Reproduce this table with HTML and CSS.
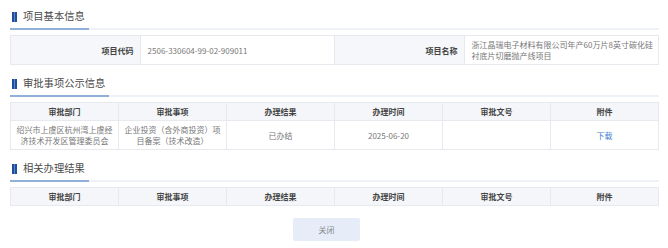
FILE: index.html
```
<!DOCTYPE html>
<html lang="zh-CN">
<head>
<meta charset="utf-8">
<link rel="stylesheet" href="styles.css">
</head>
<body>
<div class="page">
  <div class="sec-title first"><div class="sec-title-inner"><span class="bar"></span><span class="sec-text">项目基本信息</span></div></div>
  <table class="info">
    <colgroup><col class="c20"><col class="c30"><col class="c20"><col class="c30"></colgroup>
    <tr>
      <th>项目代码</th>
      <td>2506-330604-99-02-909011</td>
      <th>项目名称</th>
      <td>浙江晶瑞电子材料有限公司年产60万片8英寸碳化硅衬底片切磨抛产线项目</td>
    </tr>
  </table>

  <div class="sec-title"><div class="sec-title-inner"><span class="bar"></span><span class="sec-text">审批事项公示信息</span></div></div>
  <table class="grid">
    <tr class="head">
      <th>审批部门</th><th>审批事项</th><th>办理结果</th><th>办理时间</th><th>审批文号</th><th>附件</th>
    </tr>
    <tr class="row">
      <td>绍兴市上虞区杭州湾上虞经济技术开发区管理委员会</td>
      <td>企业投资（含外商投资）项目备案（技术改造）</td>
      <td>已办结</td>
      <td>2025-06-20</td>
      <td></td>
      <td><a class="link">下载</a></td>
    </tr>
  </table>

  <div class="sec-title"><div class="sec-title-inner"><span class="bar"></span><span class="sec-text">相关办理结果</span></div></div>
  <table class="grid">
    <tr class="head">
      <th>审批部门</th><th>审批事项</th><th>办理结果</th><th>办理时间</th><th>审批文号</th><th>附件</th>
    </tr>
  </table>

  <div class="actions"><button class="btn">关闭</button></div>
</div>
</body>
</html>
```

FILE: styles.css
```
html, body {
  margin: 0;
  padding: 0;
  background: #ffffff;
}
.page {
  padding: 5px 9px 0 10px;
  font-family: "Noto Sans CJK SC", "Noto Sans", sans-serif;
  color: #666;
}
.sec-title {
  display: flex;
  border-bottom: 2px solid #eef1f5;
  margin-top: 7px;
}
.sec-title.first {
  margin-top: 0;
}
.sec-title-inner {
  display: flex;
  align-items: center;
  height: 23px;
  padding: 0 4px 0 2px;
  border-bottom: 2px solid #8fb1d9;
  margin-bottom: -2px;
}
.bar {
  width: 5px;
  height: 10px;
  margin-right: 6px;
  background: linear-gradient(to right, #1d4f9e 0, #1d4f9e 2px, #5f86c4 2px, #5f86c4 3px, #1d4f9e 3px);
}
.sec-text {
  font-size: 10.3px;
  color: #4a4a4a;
  line-height: 1;
}
table {
  width: 100%;
  border-collapse: collapse;
  table-layout: fixed;
  margin-top: 5px;
  font-size: 8px;
}
.c20 { width: 20%; }
.c30 { width: 30%; }
.info th, .info td {
  border: 1px solid #e6e9ee;
  height: 28px;
  line-height: 11px;
}
.info th {
  background: #f5f7fa;
  color: #444;
  font-weight: bold;
  text-align: right;
  padding: 0 6px 0 6px;
}
.info td {
  background: #fff;
  color: #777;
  text-align: left;
  padding: 0 5px 0 7px;
}
.grid th, .grid td {
  border: 1px solid #e6e9ee;
  text-align: center;
  padding: 0 5px;
}
.grid .head th {
  background: #f4f6f9;
  color: #444;
  font-weight: bold;
  height: 17px;
  line-height: 11px;
}
.grid .row td {
  height: 28px;
  line-height: 11px;
  color: #777;
}
.link {
  color: #3f7fd0;
  text-decoration: none;
}
.actions {
  display: flex;
  justify-content: center;
  padding-right: 16px;
  margin-top: 12px;
}
.btn {
  width: 67px;
  height: 23px;
  border: none;
  border-radius: 2px;
  background: #e6edf9;
  color: #888;
  font-family: "Noto Sans CJK SC", sans-serif;
  font-size: 8px;
  padding: 0;
}
```
